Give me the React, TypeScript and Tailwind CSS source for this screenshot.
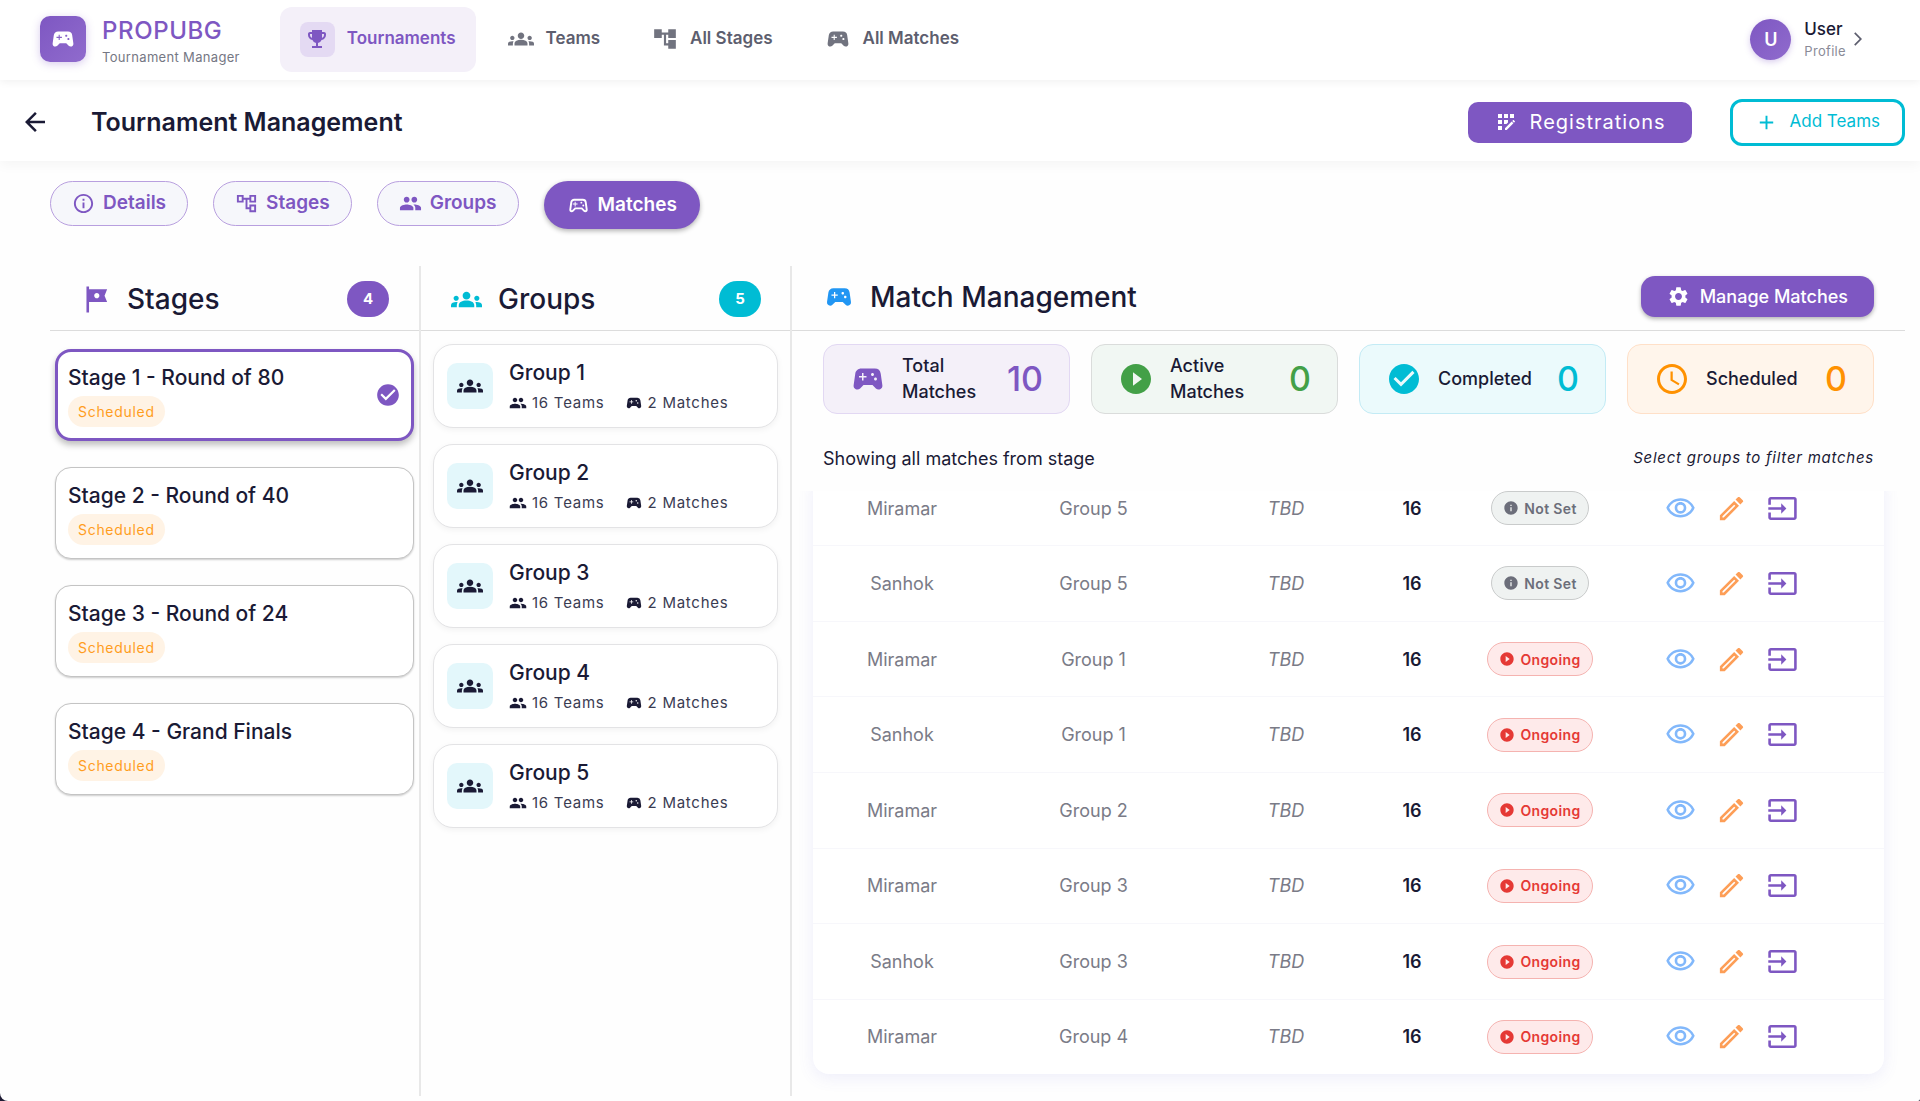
import type { IconType } from 'react-icons';
import {
  MdAccountTree,
  MdAdd,
  MdAppRegistration,
  MdArrowBack,
  MdArrowForwardIos,
  MdCheckCircle,
  MdEmojiEvents,
  MdGroups,
  MdInfo,
  MdInfoOutline,
  MdInput,
  MdOutlineAccountTree,
  MdOutlineEdit,
  MdOutlineSportsEsports,
  MdOutlineVisibility,
  MdPeople,
  MdPlayCircleFilled,
  MdSchedule,
  MdSettings,
  MdSportsEsports,
  MdTour,
} from 'react-icons/md';

const navItems: { label: string; icon: IconType }[] = [
  { label: 'Teams', icon: MdGroups },
  { label: 'All Stages', icon: MdAccountTree },
  { label: 'All Matches', icon: MdSportsEsports },
];

const tabs: { label: string; icon: IconType }[] = [
  { label: 'Details', icon: MdInfoOutline },
  { label: 'Stages', icon: MdOutlineAccountTree },
  { label: 'Groups', icon: MdPeople },
];

const stages = [
  'Stage 1 - Round of 80',
  'Stage 2 - Round of 40',
  'Stage 3 - Round of 24',
  'Stage 4 - Grand Finals',
];

const groups = ['Group 1', 'Group 2', 'Group 3', 'Group 4', 'Group 5'];

const stats = [
  { label: 'Total Matches', value: 10, icon: MdSportsEsports, card: 'bg-[#f4f0f9] border-[#e2d8f3]', color: 'text-[#7e57c2]' },
  { label: 'Active Matches', value: 0, icon: MdPlayCircleFilled, card: 'bg-[#f1f7f3] border-[#dadcdb]', color: 'text-[#43a047]' },
  { label: 'Completed', value: 0, icon: MdCheckCircle, card: 'bg-[#ebfafc] border-[#c3ebf5]', color: 'text-[#00bcd4]' },
  { label: 'Scheduled', value: 0, icon: MdSchedule, card: 'bg-[#fff5eb] border-[#ffe0c8]', color: 'text-[#ff9100]' },
];

const matches = [
  { map: 'Miramar', group: 'Group 5', ongoing: false },
  { map: 'Sanhok', group: 'Group 5', ongoing: false },
  { map: 'Miramar', group: 'Group 1', ongoing: true },
  { map: 'Sanhok', group: 'Group 1', ongoing: true },
  { map: 'Miramar', group: 'Group 2', ongoing: true },
  { map: 'Miramar', group: 'Group 3', ongoing: true },
  { map: 'Sanhok', group: 'Group 3', ongoing: true },
  { map: 'Miramar', group: 'Group 4', ongoing: true },
];

function Header() {
  return (
    <header className="relative z-20 flex h-20 items-center bg-white pr-[54px] pb-0.5 pl-10 shadow-[0_2px_8px_rgba(0,0,0,0.06)]">
      <div className="flex items-center gap-4">
        <div className="flex h-[46px] w-[46px] items-center justify-center rounded-[10px] bg-linear-to-br from-[#7e57c2] to-[#906bcd] shadow-[0_2px_8px_rgba(126,87,194,0.3)]">
          <MdSportsEsports className="h-[26px] w-[26px] text-white" />
        </div>
        <div className="pt-1">
          <div className="text-[24px] leading-8 font-medium tracking-wide text-[#7e57c2]">PROPUBG</div>
          <div className="text-[13px] leading-5 tracking-wide text-[#757784]">Tournament Manager</div>
        </div>
      </div>

      <nav className="ml-10 flex items-center gap-3">
        <a href="#" className="flex h-[65px] items-center gap-3 rounded-xl bg-[#f4f0f9] px-5 text-[17px] font-semibold text-[#7e57c2]">
          <span className="flex h-[35px] w-[35px] items-center justify-center rounded-lg bg-[#e4daf3]">
            <MdEmojiEvents className="h-6 w-6" />
          </span>
          Tournaments
        </a>
        {navItems.map(({ label, icon: Icon }) => (
          <a key={label} href="#" className="flex h-[65px] items-center gap-3 px-5 text-[17px] font-semibold text-[#5d5e6e]">
            <Icon className="h-[26px] w-[26px] text-[#71737f]" />
            {label}
          </a>
        ))}
      </nav>

      <button type="button" className="ml-auto flex items-center text-left">
        <span className="flex h-[41px] w-[41px] items-center justify-center rounded-full bg-linear-to-br from-[#7e57c2] to-[#906bcd] text-[18px] font-semibold text-white shadow-[0_2px_6px_rgba(126,87,194,0.3)]">
          U
        </span>
        <span className="ml-[13px] flex flex-col pt-1">
          <span className="text-[17px] leading-5 font-medium text-[#1a1a35]">User</span>
          <span className="text-[13px] leading-6 tracking-wide text-[#8a8b97]">Profile</span>
        </span>
        <MdArrowForwardIos className="ml-1 h-4 w-4 text-[#5d5e6e]" />
      </button>
    </header>
  );
}

function TitleBar() {
  return (
    <div className="relative z-10 flex h-[81px] items-center bg-white pt-[3px] pr-[15px] pl-5 shadow-[0_4px_12px_rgba(0,0,0,0.04)]">
      <button type="button" aria-label="Back" className="text-[#1a1a35]">
        <MdArrowBack className="h-[30px] w-[30px]" />
      </button>
      <h1 className="ml-[41px] text-[25px] leading-8 font-semibold text-[#1a1a35]">Tournament Management</h1>
      <div className="ml-auto flex items-center gap-[38px]">
        <button type="button" className="flex h-[41px] items-center gap-3 rounded-[10px] bg-[#7e57c2] px-[26px] text-[20px] tracking-wider text-white">
          <MdAppRegistration className="h-6 w-6" />
          Registrations
        </button>
        <button type="button" className="flex h-[47px] items-center gap-3 rounded-xl border-[3px] border-[#00bcd4] px-[22px] text-[17px] text-[#00bcd4]">
          <MdAdd className="h-[23px] w-[23px]" />
          Add Teams
        </button>
      </div>
    </div>
  );
}

function Tabs() {
  return (
    <div className="flex h-12 items-start gap-[25px] text-[19px] font-semibold">
      {tabs.map(({ label, icon: Icon }) => (
        <button key={label} type="button" className="flex h-[45px] items-center gap-2 rounded-full border border-[#b89fdf] bg-[#f6f7fb] px-[21px] text-[#7e57c2]">
          <Icon className="h-[23px] w-[23px]" />
          {label}
        </button>
      ))}
      <button type="button" className="flex h-12 items-center gap-2 rounded-full bg-[#7e57c2] px-[23px] text-white shadow-[0_2px_5px_rgba(0,0,0,0.3)]">
        <MdOutlineSportsEsports className="h-[23px] w-[23px]" />
        Matches
      </button>
    </div>
  );
}

function StagesColumn() {
  return (
    <section className="border-r-2 border-[#e8e8e8]">
      <div className="flex h-[65px] items-center border-b border-[#dcdcdc] pt-0.5 pr-[30px] pl-[30px]">
        <MdTour className="h-[31px] w-[31px] text-[#7e57c2]" />
        <h2 className="ml-4 text-[28px] leading-9 font-medium text-[#1a1a35]">Stages</h2>
        <span className="ml-auto flex h-9 w-[42px] items-center justify-center rounded-full bg-[#7e57c2] text-[15px] font-bold text-white">4</span>
      </div>
      <div className="flex flex-col gap-[26px] px-[5px] pt-[18px]">
        {stages.map((stage, i) => (
          <button
            key={stage}
            type="button"
            className={
              i === 0
                ? 'flex h-[92px] items-center justify-between rounded-2xl border-[3px] border-[#7e57c2] bg-white px-[10px] text-left shadow-[0_4px_6px_rgba(0,0,0,0.25)]'
                : 'flex h-[92px] items-center justify-between rounded-2xl border border-[#c4c4c4] bg-white px-3 text-left shadow-[0_1px_2px_rgba(0,0,0,0.2)]'
            }
          >
            <span>
              <span className="block text-[21px] leading-7 font-medium text-[#1a1a35]">{stage}</span>
              <span className="mt-1 flex h-[31px] w-fit items-center rounded-full bg-[#fff3e5] px-[10px] text-[14px] tracking-wider text-[#ff9d1e]">
                Scheduled
              </span>
            </span>
            {i === 0 && <MdCheckCircle className="h-[26px] w-[26px] text-[#7e57c2]" />}
          </button>
        ))}
      </div>
    </section>
  );
}

function GroupsColumn() {
  return (
    <section className="border-r-2 border-[#e8e8e8]">
      <div className="flex h-[65px] items-center border-b border-[#dcdcdc] pt-0.5 pr-[29px] pl-[30px]">
        <MdGroups className="h-[31px] w-[31px] text-[#00bcd4]" />
        <h2 className="ml-4 text-[28px] leading-9 font-medium text-[#1a1a35]">Groups</h2>
        <span className="ml-auto flex h-9 w-[42px] items-center justify-center rounded-full bg-[#00bcd4] text-[15px] font-bold text-white">5</span>
      </div>
      <div className="flex flex-col gap-4 px-3 pt-[13px]">
        {groups.map((group) => (
          <button
            key={group}
            type="button"
            className="flex h-[84px] items-center gap-4 rounded-[20px] border border-[#e3e3e5] bg-white px-[13px] text-left text-[#1a1a35] shadow-[0_2px_6px_rgba(0,0,0,0.05)]"
          >
            <span className="flex h-[46px] w-[46px] items-center justify-center rounded-[10px] bg-[#e3f7fb]">
              <MdGroups className="h-[26px] w-[26px]" />
            </span>
            <span className="pt-0.5">
              <span className="block text-[21px] leading-7 font-medium">{group}</span>
              <span className="mt-1 flex items-center text-[15px] leading-6 tracking-wider text-[#3a3b52]">
                <MdPeople className="mr-[5px] h-[18px] w-[18px] text-[#1a1a35]" />
                16 Teams
                <MdSportsEsports className="mr-[5px] ml-5 h-[18px] w-[18px] text-[#1a1a35]" />
                2 Matches
              </span>
            </span>
          </button>
        ))}
      </div>
    </section>
  );
}

function StatusBadge({ ongoing }: { ongoing: boolean }) {
  if (ongoing) {
    return (
      <span className="inline-flex h-[34px] items-center gap-[5px] rounded-full border border-[#f5b3b0] bg-[#feeaea] px-[11px] text-[14px] font-semibold tracking-wide text-[#e53935]">
        <MdPlayCircleFilled className="h-4 w-4" />
        Ongoing
      </span>
    );
  }
  return (
    <span className="inline-flex h-[34px] items-center gap-[5px] rounded-full border border-[#c9cbcb] bg-[#eff2f1] px-[11px] text-[14px] font-semibold tracking-wide text-[#6c6e7a]">
      <MdInfo className="h-4 w-4" />
      Not Set
    </span>
  );
}

function MatchTable() {
  return (
    <div className="overflow-hidden px-[21px] pb-5">
      {/* list is scrolled a little, so the first row is cut at the top */}
      <div className="-mt-5 overflow-hidden rounded-2xl bg-white shadow-[0_4px_16px_rgba(100,100,220,0.1)]">
        <table className="h-[603px] w-full table-fixed text-center text-[18px] text-[#7a7b87]">
          <colgroup>
            <col className="w-[178px]" />
            <col className="w-[205px]" />
            <col className="w-[180px]" />
            <col className="w-[72px]" />
            <col className="w-[184px]" />
            <col />
          </colgroup>
          <tbody>
            {matches.map((match, i) => (
              <tr key={i} className="border-b border-[#f7f7fb] last:border-b-0">
                <td>{match.map}</td>
                <td>{match.group}</td>
                <td className="italic">TBD</td>
                <td className="font-semibold text-[#1a1a35]">16</td>
                <td>
                  <StatusBadge ongoing={match.ongoing} />
                </td>
                <td className="pr-[54px]">
                  <div className="flex items-center justify-center gap-5">
                    <button type="button" aria-label="View" className="text-[#82b8fb]">
                      <MdOutlineVisibility className="h-[31px] w-[31px]" />
                    </button>
                    <button type="button" aria-label="Edit" className="text-[#fd9e57]">
                      <MdOutlineEdit className="h-[31px] w-[31px]" />
                    </button>
                    <button type="button" aria-label="Enter results" className="text-[#7e57c2]">
                      <MdInput className="h-[31px] w-[31px]" />
                    </button>
                  </div>
                </td>
              </tr>
            ))}
          </tbody>
        </table>
      </div>
    </div>
  );
}

function MatchPanel() {
  return (
    <section className="min-w-0">
      <div className="flex h-[65px] items-center border-b border-[#dcdcdc] pr-[31px] pb-[3px] pl-8">
        <MdSportsEsports className="h-[30px] w-[30px] text-[#2196f3]" />
        <h2 className="ml-4 text-[28px] leading-9 font-medium text-[#1a1a35]">Match Management</h2>
        <button type="button" className="ml-auto flex h-[41px] items-center gap-[10px] rounded-[14px] bg-[#7e57c2] px-[26px] text-[18px] font-medium text-white shadow-[0_2px_4px_rgba(0,0,0,0.3)]">
          <MdSettings className="h-[23px] w-[23px]" />
          Manage Matches
        </button>
      </div>

      <div className="grid grid-cols-4 gap-[21px] pt-[13px] pr-[31px] pl-[31px]">
        {stats.map(({ label, value, icon: Icon, card, color }) => (
          <div key={label} className={`flex h-[70px] items-center rounded-[14px] border px-[26px] ${card}`}>
            <Icon className={`h-9 w-9 shrink-0 ${color}`} />
            <div className="ml-4 flex-1 text-[18px] leading-[26px] font-medium text-[#1a1a35]">{label}</div>
            <div className={`text-[34px] leading-10 font-medium ${color}`}>{value}</div>
          </div>
        ))}
      </div>

      <div className="flex h-[77px] items-center justify-between pt-[11px] pr-[31px] pl-[31px] text-[#1a1a35]">
        <p className="text-[18px]">Showing all matches from stage</p>
        <p className="text-[15px] tracking-wider italic">Select groups to filter matches</p>
      </div>

      <MatchTable />
    </section>
  );
}

export default function App() {
  return (
    <div className="min-h-screen bg-[#1e1b34] font-['Inter',sans-serif]">
      <div className="flex min-h-screen flex-col rounded-br-[2px] rounded-bl-[8px] bg-[#fefefe]">
        <Header />
        <TitleBar />
        <main className="flex flex-1 flex-col pt-5 pr-[15px] pb-[5px] pl-[50px]">
          <Tabs />
          <div className="mt-[37px] grid flex-1 grid-cols-[1fr_1fr_3fr]">
            <StagesColumn />
            <GroupsColumn />
            <MatchPanel />
          </div>
        </main>
      </div>
    </div>
  );
}
